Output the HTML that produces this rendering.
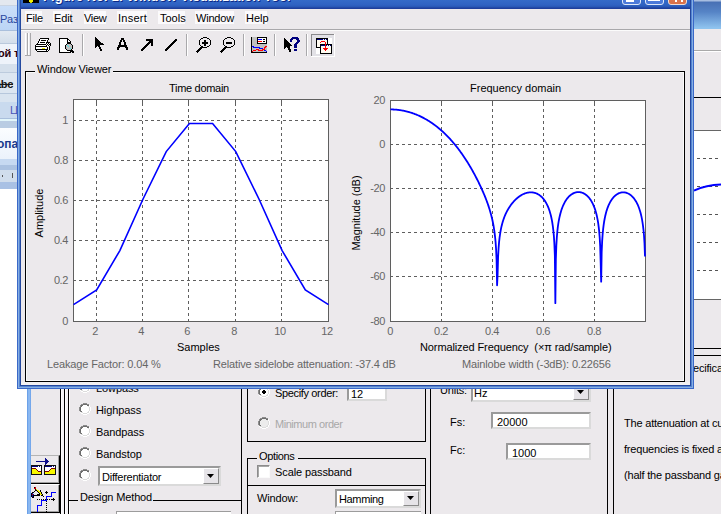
<!DOCTYPE html>
<html><head><meta charset="utf-8"><style>
html,body{margin:0;padding:0}
body{width:721px;height:514px;position:relative;overflow:hidden;background:#fff;font-family:"Liberation Sans", sans-serif}
.t{position:absolute;white-space:nowrap;font-family:"Liberation Sans", sans-serif;font-size:11px;line-height:14px}
</style></head><body>
<div style="position:absolute;left:0px;top:0px;width:17px;height:5px;background:#e3e8ef"></div><div style="position:absolute;left:0px;top:5px;width:17px;height:1px;background:#c9d4e2"></div><div style="position:absolute;left:0px;top:6px;width:17px;height:24px;background:linear-gradient(#c9def9,#bcd5f5)"></div><div style="position:absolute;left:0px;top:30px;width:17px;height:1px;background:#a9bfdc"></div><div style="position:absolute;left:0px;top:31px;width:17px;height:12px;background:linear-gradient(#e2e9f1,#d3deea)"></div><div style="position:absolute;left:0px;top:43px;width:17px;height:1px;background:#b9c9dc"></div><div style="position:absolute;left:0px;top:44px;width:17px;height:20px;background:#eef3fa"></div><div style="position:absolute;left:0px;top:64px;width:17px;height:8px;background:#d5e0ec"></div><div style="position:absolute;left:0px;top:72px;width:17px;height:1px;background:#bccbdd"></div><div style="position:absolute;left:0px;top:73px;width:17px;height:20px;background:#dce6f1"></div><div style="position:absolute;left:0px;top:93px;width:17px;height:1px;background:#b6c7dc"></div><div style="position:absolute;left:0px;top:94px;width:17px;height:8px;background:#d9e4f0"></div><div style="position:absolute;left:0px;top:102px;width:17px;height:16px;background:#c9daee"></div><div style="position:absolute;left:0px;top:118px;width:17px;height:1px;background:#a9bfdc"></div><div style="position:absolute;left:0px;top:119px;width:17px;height:2px;background:#e2f5fa"></div><div style="position:absolute;left:0px;top:121px;width:17px;height:7px;background:#b9cce3"></div><div style="position:absolute;left:0px;top:128px;width:17px;height:31px;background:linear-gradient(#fbfdff,#ebf2fb)"></div><div style="position:absolute;left:0px;top:159px;width:17px;height:6px;background:#c6d9f1"></div><div style="position:absolute;left:0px;top:165px;width:17px;height:5px;background:#abc2e1"></div><div style="position:absolute;left:0px;top:170px;width:17px;height:12px;background:#d0ddec"></div><div style="position:absolute;left:0px;top:182px;width:17px;height:7px;background:#a9c1e4"></div><div class="t" style="left:0px;top:12px;font-size:11px;color:#2a48a0;">Раз</div><div class="t" style="left:-2px;top:46px;font-size:11px;color:#2a0010;letter-spacing:-0.2px;font-weight:bold">ой т</div><div class="t" style="left:-5px;top:77px;font-size:11px;color:#181818;letter-spacing:-0.3px;text-decoration:line-through;font-weight:bold">abc</div><div class="t" style="left:10px;top:103px;font-size:11px;color:#4a55b8;">Ц</div><div class="t" style="left:-3px;top:137px;font-size:12px;color:#1c3a8c;font-weight:bold">опа</div><div style="position:absolute;left:2px;top:175px;width:1px;height:2px;background:#555"></div><div style="position:absolute;left:12px;top:173px;width:1px;height:5px;background:#555"></div><div style="position:absolute;left:694px;top:0px;width:27px;height:389px;background:#ece9ec"></div><div style="position:absolute;left:694px;top:0px;width:27px;height:29px;background:linear-gradient(#a7bde0 0,#a7bde0 1px,#4870b4 2px,#5684c6 12px,#8fc3ee 28px)"></div><div style="position:absolute;left:694px;top:50px;width:27px;height:1px;background:#a9a9a9"></div><div style="position:absolute;left:694px;top:51px;width:27px;height:1px;background:#fff"></div><div style="position:absolute;left:694px;top:97px;width:27px;height:1px;background:#000"></div><div style="position:absolute;left:694px;top:130px;width:27px;height:170px;background:#fff;border-top:1px solid #666;border-bottom:1px solid #666;box-sizing:border-box"></div><div style="position:absolute;left:697px;top:158px;width:24px;height:1px;background:repeating-linear-gradient(90deg,#555 0 3px,transparent 3px 6px)"></div><div style="position:absolute;left:697px;top:186px;width:24px;height:1px;background:repeating-linear-gradient(90deg,#555 0 3px,transparent 3px 6px)"></div><div style="position:absolute;left:697px;top:214px;width:24px;height:1px;background:repeating-linear-gradient(90deg,#555 0 3px,transparent 3px 6px)"></div><div style="position:absolute;left:697px;top:242px;width:24px;height:1px;background:repeating-linear-gradient(90deg,#555 0 3px,transparent 3px 6px)"></div><div style="position:absolute;left:697px;top:270px;width:24px;height:1px;background:repeating-linear-gradient(90deg,#555 0 3px,transparent 3px 6px)"></div><svg style="position:absolute;left:694px;top:175px" width="27" height="20"><path d="M0,15.5 C8,12 16,10 27,9.5" stroke="#0000ff" stroke-width="2" fill="none"/></svg><div style="position:absolute;left:694px;top:348px;width:27px;height:1px;background:#000"></div><div style="position:absolute;left:694px;top:355px;width:27px;height:1px;background:#000"></div><div class="t" style="left:680px;top:361px;font-size:11px;color:#000;letter-spacing:-0.2px;">Specifica</div><div style="position:absolute;left:31px;top:389px;width:690px;height:125px;background:#ece9ec"></div><div style="position:absolute;left:27px;top:389px;width:4px;height:125px;background:linear-gradient(90deg,#5f96e4,#95c1f4,#6a9fe9)"></div><div style="position:absolute;left:31px;top:455px;width:29px;height:29px;border-top:1px solid #b4b4b4;border-right:1px solid #000;border-bottom:1px solid #000;box-sizing:border-box;box-shadow:inset -1px -1px #a0a0a0"></div><div style="position:absolute;left:31px;top:484px;width:29px;height:29px;border-top:1px solid #fff;border-right:1px solid #000;border-bottom:1px solid #000;box-sizing:border-box;box-shadow:inset -1px -1px #a0a0a0"></div><svg style="position:absolute;left:0;top:0" width="721" height="514" shape-rendering="crispEdges"><rect x="31" y="465" width="11" height="1" fill="#101010"/><rect x="31" y="466" width="1" height="1" fill="#101010"/><rect x="32" y="466" width="6" height="1" fill="#000080"/><rect x="38" y="466" width="1" height="1" fill="#fff"/><rect x="39" y="466" width="1" height="1" fill="#000080"/><rect x="40" y="466" width="1" height="1" fill="#fff"/><rect x="41" y="466" width="1" height="1" fill="#101010"/><rect x="31" y="467" width="1" height="1" fill="#101010"/><rect x="32" y="467" width="9" height="1" fill="#fff"/><rect x="41" y="467" width="1" height="1" fill="#101010"/><rect x="31" y="468" width="1" height="1" fill="#101010"/><rect x="32" y="468" width="4" height="1" fill="#800000"/><rect x="36" y="468" width="5" height="1" fill="#fff"/><rect x="41" y="468" width="1" height="1" fill="#101010"/><rect x="31" y="469" width="1" height="1" fill="#101010"/><rect x="32" y="469" width="4" height="1" fill="#f8f800"/><rect x="36" y="469" width="1" height="1" fill="#800000"/><rect x="37" y="469" width="4" height="1" fill="#fff"/><rect x="41" y="469" width="1" height="1" fill="#101010"/><rect x="31" y="470" width="1" height="1" fill="#101010"/><rect x="32" y="470" width="5" height="1" fill="#f8f800"/><rect x="37" y="470" width="1" height="1" fill="#800000"/><rect x="38" y="470" width="3" height="1" fill="#fff"/><rect x="41" y="470" width="1" height="1" fill="#101010"/><rect x="31" y="471" width="1" height="1" fill="#101010"/><rect x="32" y="471" width="6" height="1" fill="#f8f800"/><rect x="38" y="471" width="3" height="1" fill="#800000"/><rect x="41" y="471" width="1" height="1" fill="#101010"/><rect x="31" y="472" width="1" height="1" fill="#101010"/><rect x="32" y="472" width="9" height="1" fill="#f8f800"/><rect x="41" y="472" width="1" height="1" fill="#101010"/><rect x="31" y="473" width="1" height="1" fill="#101010"/><rect x="32" y="473" width="9" height="1" fill="#f8f800"/><rect x="41" y="473" width="1" height="1" fill="#101010"/><rect x="31" y="474" width="11" height="1" fill="#101010"/><rect x="44" y="465" width="12" height="1" fill="#101010"/><rect x="44" y="466" width="1" height="1" fill="#101010"/><rect x="45" y="466" width="7" height="1" fill="#000080"/><rect x="52" y="466" width="1" height="1" fill="#fff"/><rect x="53" y="466" width="1" height="1" fill="#000080"/><rect x="54" y="466" width="1" height="1" fill="#fff"/><rect x="55" y="466" width="1" height="1" fill="#101010"/><rect x="44" y="467" width="1" height="1" fill="#101010"/><rect x="45" y="467" width="10" height="1" fill="#fff"/><rect x="55" y="467" width="1" height="1" fill="#101010"/><rect x="44" y="468" width="1" height="1" fill="#101010"/><rect x="45" y="468" width="6" height="1" fill="#fff"/><rect x="51" y="468" width="4" height="1" fill="#800000"/><rect x="55" y="468" width="1" height="1" fill="#101010"/><rect x="44" y="469" width="1" height="1" fill="#101010"/><rect x="45" y="469" width="5" height="1" fill="#fff"/><rect x="50" y="469" width="1" height="1" fill="#800000"/><rect x="51" y="469" width="4" height="1" fill="#f8f800"/><rect x="55" y="469" width="1" height="1" fill="#101010"/><rect x="44" y="470" width="1" height="1" fill="#101010"/><rect x="45" y="470" width="4" height="1" fill="#fff"/><rect x="49" y="470" width="1" height="1" fill="#800000"/><rect x="50" y="470" width="5" height="1" fill="#f8f800"/><rect x="55" y="470" width="1" height="1" fill="#101010"/><rect x="44" y="471" width="1" height="1" fill="#101010"/><rect x="45" y="471" width="4" height="1" fill="#800000"/><rect x="49" y="471" width="6" height="1" fill="#f8f800"/><rect x="55" y="471" width="1" height="1" fill="#101010"/><rect x="44" y="472" width="1" height="1" fill="#101010"/><rect x="45" y="472" width="10" height="1" fill="#f8f800"/><rect x="55" y="472" width="1" height="1" fill="#101010"/><rect x="44" y="473" width="1" height="1" fill="#101010"/><rect x="45" y="473" width="10" height="1" fill="#f8f800"/><rect x="55" y="473" width="1" height="1" fill="#101010"/><rect x="44" y="474" width="12" height="1" fill="#101010"/><rect x="45" y="458" width="1" height="1" fill="#10108c"/><rect x="45" y="459" width="2" height="1" fill="#10108c"/><rect x="45" y="460" width="3" height="1" fill="#10108c"/><rect x="36" y="461" width="13" height="1" fill="#10108c"/><rect x="45" y="462" width="3" height="1" fill="#10108c"/><rect x="45" y="463" width="2" height="1" fill="#10108c"/><rect x="45" y="464" width="1" height="1" fill="#10108c"/><rect x="34" y="487" width="1" height="1" fill="#000"/><rect x="35" y="487" width="1" height="1" fill="#d00000"/><rect x="34" y="488" width="2" height="1" fill="#d00000"/><rect x="35" y="489" width="1" height="1" fill="#000"/><rect x="36" y="489" width="1" height="1" fill="#f0f000"/><rect x="35" y="490" width="2" height="1" fill="#000"/><rect x="37" y="490" width="2" height="1" fill="#f0f000"/><rect x="40" y="490" width="1" height="1" fill="#000"/><rect x="34" y="491" width="1" height="1" fill="#000"/><rect x="35" y="491" width="2" height="1" fill="#e8e8e8"/><rect x="37" y="491" width="1" height="1" fill="#000"/><rect x="38" y="491" width="2" height="1" fill="#f0f000"/><rect x="40" y="491" width="1" height="1" fill="#000"/><rect x="46" y="491" width="1" height="1" fill="#000"/><rect x="32" y="492" width="2" height="1" fill="#000"/><rect x="34" y="492" width="4" height="1" fill="#e8e8e8"/><rect x="38" y="492" width="1" height="1" fill="#000"/><rect x="39" y="492" width="2" height="1" fill="#f0f000"/><rect x="41" y="492" width="1" height="1" fill="#000"/><rect x="45" y="492" width="3" height="1" fill="#000"/><rect x="51" y="492" width="5" height="1" fill="#0000ff"/><rect x="31" y="493" width="1" height="1" fill="#000"/><rect x="32" y="493" width="1" height="1" fill="#0010a0"/><rect x="33" y="493" width="6" height="1" fill="#e8e8e8"/><rect x="39" y="493" width="1" height="1" fill="#000"/><rect x="40" y="493" width="1" height="1" fill="#f0f000"/><rect x="41" y="493" width="1" height="1" fill="#000"/><rect x="46" y="493" width="1" height="1" fill="#000"/><rect x="51" y="493" width="1" height="1" fill="#0000ff"/><rect x="31" y="494" width="1" height="1" fill="#000"/><rect x="32" y="494" width="1" height="1" fill="#d00000"/><rect x="33" y="494" width="1" height="1" fill="#0010a0"/><rect x="34" y="494" width="3" height="1" fill="#e8e8e8"/><rect x="37" y="494" width="3" height="1" fill="#000"/><rect x="40" y="494" width="2" height="1" fill="#f0f000"/><rect x="42" y="494" width="1" height="1" fill="#000"/><rect x="51" y="494" width="1" height="1" fill="#0000ff"/><rect x="31" y="495" width="1" height="1" fill="#000"/><rect x="32" y="495" width="1" height="1" fill="#0010a0"/><rect x="33" y="495" width="7" height="1" fill="#000"/><rect x="41" y="495" width="2" height="1" fill="#000"/><rect x="51" y="495" width="1" height="1" fill="#0000ff"/><rect x="31" y="496" width="1" height="1" fill="#000"/><rect x="32" y="496" width="1" height="1" fill="#0010a0"/><rect x="33" y="496" width="1" height="1" fill="#000"/><rect x="43" y="496" width="1" height="1" fill="#000"/><rect x="46" y="496" width="6" height="1" fill="#0000ff"/><rect x="32" y="497" width="2" height="1" fill="#000"/><rect x="46" y="497" width="1" height="1" fill="#0000ff"/><rect x="46" y="498" width="1" height="1" fill="#0000ff"/><rect x="53" y="498" width="1" height="1" fill="#000"/><rect x="37" y="499" width="1" height="1" fill="#000"/><rect x="39" y="499" width="1" height="1" fill="#000"/><rect x="41" y="499" width="1" height="1" fill="#000"/><rect x="43" y="499" width="1" height="1" fill="#000"/><rect x="45" y="499" width="1" height="1" fill="#000"/><rect x="46" y="499" width="1" height="1" fill="#0000ff"/><rect x="47" y="499" width="1" height="1" fill="#000"/><rect x="49" y="499" width="1" height="1" fill="#000"/><rect x="51" y="499" width="4" height="1" fill="#000"/><rect x="41" y="500" width="6" height="1" fill="#0000ff"/><rect x="53" y="500" width="1" height="1" fill="#000"/><rect x="41" y="501" width="1" height="1" fill="#0000ff"/><rect x="46" y="501" width="1" height="1" fill="#000"/><rect x="41" y="502" width="1" height="1" fill="#0000ff"/><rect x="41" y="503" width="1" height="1" fill="#0000ff"/><rect x="46" y="503" width="1" height="1" fill="#000"/><rect x="41" y="504" width="1" height="1" fill="#0000ff"/><rect x="37" y="505" width="5" height="1" fill="#0000ff"/><rect x="46" y="505" width="1" height="1" fill="#000"/><rect x="37" y="506" width="1" height="1" fill="#0000ff"/><rect x="37" y="507" width="1" height="1" fill="#0000ff"/><rect x="46" y="507" width="1" height="1" fill="#000"/><rect x="37" y="508" width="1" height="1" fill="#0000ff"/><rect x="37" y="509" width="1" height="1" fill="#0000ff"/><rect x="46" y="509" width="1" height="1" fill="#000"/><rect x="37" y="510" width="1" height="1" fill="#0000ff"/><rect x="37" y="511" width="1" height="1" fill="#0000ff"/><rect x="46" y="511" width="1" height="1" fill="#000"/></svg><div style="position:absolute;left:61px;top:389px;width:3px;height:125px;background:#f6f5f8"></div><div style="position:absolute;left:65px;top:389px;width:3px;height:125px;background:#f6f5f8"></div><div style="position:absolute;left:60px;top:389px;width:1px;height:125px;background:#000"></div><div style="position:absolute;left:61px;top:389px;width:1px;height:125px;background:#fff"></div><div style="position:absolute;left:64px;top:389px;width:1px;height:125px;background:#000"></div><div style="position:absolute;left:65px;top:389px;width:1px;height:125px;background:#fff"></div><div style="position:absolute;left:68px;top:389px;width:1px;height:125px;background:#000"></div><div style="position:absolute;left:69px;top:389px;width:1px;height:125px;background:#fff"></div><svg style="position:absolute;left:0;top:0" width="721" height="514" shape-rendering="crispEdges"><rect x="83" y="381" width="4" height="1" fill="#8c8c8c"/><rect x="81" y="382" width="2" height="1" fill="#8c8c8c"/><rect x="83" y="382" width="4" height="1" fill="#6c6c6c"/><rect x="87" y="382" width="2" height="1" fill="#8c8c8c"/><rect x="80" y="383" width="1" height="1" fill="#8c8c8c"/><rect x="81" y="383" width="2" height="1" fill="#6c6c6c"/><rect x="83" y="383" width="4" height="1" fill="#ffffff"/><rect x="87" y="383" width="2" height="1" fill="#6c6c6c"/><rect x="89" y="383" width="1" height="1" fill="#ffffff"/><rect x="80" y="384" width="1" height="1" fill="#8c8c8c"/><rect x="81" y="384" width="1" height="1" fill="#6c6c6c"/><rect x="82" y="384" width="6" height="1" fill="#ffffff"/><rect x="88" y="384" width="1" height="1" fill="#dcdcdc"/><rect x="89" y="384" width="1" height="1" fill="#ffffff"/><rect x="79" y="385" width="1" height="1" fill="#8c8c8c"/><rect x="80" y="385" width="1" height="1" fill="#6c6c6c"/><rect x="81" y="385" width="8" height="1" fill="#ffffff"/><rect x="89" y="385" width="1" height="1" fill="#dcdcdc"/><rect x="90" y="385" width="1" height="1" fill="#ffffff"/><rect x="79" y="386" width="1" height="1" fill="#8c8c8c"/><rect x="80" y="386" width="1" height="1" fill="#6c6c6c"/><rect x="81" y="386" width="8" height="1" fill="#ffffff"/><rect x="89" y="386" width="1" height="1" fill="#dcdcdc"/><rect x="90" y="386" width="1" height="1" fill="#ffffff"/><rect x="79" y="387" width="1" height="1" fill="#8c8c8c"/><rect x="80" y="387" width="1" height="1" fill="#6c6c6c"/><rect x="81" y="387" width="8" height="1" fill="#ffffff"/><rect x="89" y="387" width="1" height="1" fill="#dcdcdc"/><rect x="90" y="387" width="1" height="1" fill="#ffffff"/><rect x="79" y="388" width="1" height="1" fill="#8c8c8c"/><rect x="80" y="388" width="1" height="1" fill="#6c6c6c"/><rect x="81" y="388" width="8" height="1" fill="#ffffff"/><rect x="89" y="388" width="1" height="1" fill="#dcdcdc"/><rect x="90" y="388" width="1" height="1" fill="#ffffff"/><rect x="80" y="389" width="1" height="1" fill="#8c8c8c"/><rect x="81" y="389" width="1" height="1" fill="#6c6c6c"/><rect x="82" y="389" width="6" height="1" fill="#ffffff"/><rect x="88" y="389" width="1" height="1" fill="#dcdcdc"/><rect x="89" y="389" width="1" height="1" fill="#ffffff"/><rect x="80" y="390" width="1" height="1" fill="#ffffff"/><rect x="81" y="390" width="2" height="1" fill="#dcdcdc"/><rect x="83" y="390" width="4" height="1" fill="#ffffff"/><rect x="87" y="390" width="2" height="1" fill="#dcdcdc"/><rect x="89" y="390" width="1" height="1" fill="#ffffff"/><rect x="81" y="391" width="2" height="1" fill="#ffffff"/><rect x="83" y="391" width="4" height="1" fill="#dcdcdc"/><rect x="87" y="391" width="2" height="1" fill="#ffffff"/><rect x="83" y="392" width="4" height="1" fill="#ffffff"/></svg><svg style="position:absolute;left:0;top:0" width="721" height="514" shape-rendering="crispEdges"><rect x="83" y="403" width="4" height="1" fill="#8c8c8c"/><rect x="81" y="404" width="2" height="1" fill="#8c8c8c"/><rect x="83" y="404" width="4" height="1" fill="#6c6c6c"/><rect x="87" y="404" width="2" height="1" fill="#8c8c8c"/><rect x="80" y="405" width="1" height="1" fill="#8c8c8c"/><rect x="81" y="405" width="2" height="1" fill="#6c6c6c"/><rect x="83" y="405" width="4" height="1" fill="#ffffff"/><rect x="87" y="405" width="2" height="1" fill="#6c6c6c"/><rect x="89" y="405" width="1" height="1" fill="#ffffff"/><rect x="80" y="406" width="1" height="1" fill="#8c8c8c"/><rect x="81" y="406" width="1" height="1" fill="#6c6c6c"/><rect x="82" y="406" width="6" height="1" fill="#ffffff"/><rect x="88" y="406" width="1" height="1" fill="#dcdcdc"/><rect x="89" y="406" width="1" height="1" fill="#ffffff"/><rect x="79" y="407" width="1" height="1" fill="#8c8c8c"/><rect x="80" y="407" width="1" height="1" fill="#6c6c6c"/><rect x="81" y="407" width="8" height="1" fill="#ffffff"/><rect x="89" y="407" width="1" height="1" fill="#dcdcdc"/><rect x="90" y="407" width="1" height="1" fill="#ffffff"/><rect x="79" y="408" width="1" height="1" fill="#8c8c8c"/><rect x="80" y="408" width="1" height="1" fill="#6c6c6c"/><rect x="81" y="408" width="8" height="1" fill="#ffffff"/><rect x="89" y="408" width="1" height="1" fill="#dcdcdc"/><rect x="90" y="408" width="1" height="1" fill="#ffffff"/><rect x="79" y="409" width="1" height="1" fill="#8c8c8c"/><rect x="80" y="409" width="1" height="1" fill="#6c6c6c"/><rect x="81" y="409" width="8" height="1" fill="#ffffff"/><rect x="89" y="409" width="1" height="1" fill="#dcdcdc"/><rect x="90" y="409" width="1" height="1" fill="#ffffff"/><rect x="79" y="410" width="1" height="1" fill="#8c8c8c"/><rect x="80" y="410" width="1" height="1" fill="#6c6c6c"/><rect x="81" y="410" width="8" height="1" fill="#ffffff"/><rect x="89" y="410" width="1" height="1" fill="#dcdcdc"/><rect x="90" y="410" width="1" height="1" fill="#ffffff"/><rect x="80" y="411" width="1" height="1" fill="#8c8c8c"/><rect x="81" y="411" width="1" height="1" fill="#6c6c6c"/><rect x="82" y="411" width="6" height="1" fill="#ffffff"/><rect x="88" y="411" width="1" height="1" fill="#dcdcdc"/><rect x="89" y="411" width="1" height="1" fill="#ffffff"/><rect x="80" y="412" width="1" height="1" fill="#ffffff"/><rect x="81" y="412" width="2" height="1" fill="#dcdcdc"/><rect x="83" y="412" width="4" height="1" fill="#ffffff"/><rect x="87" y="412" width="2" height="1" fill="#dcdcdc"/><rect x="89" y="412" width="1" height="1" fill="#ffffff"/><rect x="81" y="413" width="2" height="1" fill="#ffffff"/><rect x="83" y="413" width="4" height="1" fill="#dcdcdc"/><rect x="87" y="413" width="2" height="1" fill="#ffffff"/><rect x="83" y="414" width="4" height="1" fill="#ffffff"/></svg><svg style="position:absolute;left:0;top:0" width="721" height="514" shape-rendering="crispEdges"><rect x="83" y="425" width="4" height="1" fill="#8c8c8c"/><rect x="81" y="426" width="2" height="1" fill="#8c8c8c"/><rect x="83" y="426" width="4" height="1" fill="#6c6c6c"/><rect x="87" y="426" width="2" height="1" fill="#8c8c8c"/><rect x="80" y="427" width="1" height="1" fill="#8c8c8c"/><rect x="81" y="427" width="2" height="1" fill="#6c6c6c"/><rect x="83" y="427" width="4" height="1" fill="#ffffff"/><rect x="87" y="427" width="2" height="1" fill="#6c6c6c"/><rect x="89" y="427" width="1" height="1" fill="#ffffff"/><rect x="80" y="428" width="1" height="1" fill="#8c8c8c"/><rect x="81" y="428" width="1" height="1" fill="#6c6c6c"/><rect x="82" y="428" width="6" height="1" fill="#ffffff"/><rect x="88" y="428" width="1" height="1" fill="#dcdcdc"/><rect x="89" y="428" width="1" height="1" fill="#ffffff"/><rect x="79" y="429" width="1" height="1" fill="#8c8c8c"/><rect x="80" y="429" width="1" height="1" fill="#6c6c6c"/><rect x="81" y="429" width="8" height="1" fill="#ffffff"/><rect x="89" y="429" width="1" height="1" fill="#dcdcdc"/><rect x="90" y="429" width="1" height="1" fill="#ffffff"/><rect x="79" y="430" width="1" height="1" fill="#8c8c8c"/><rect x="80" y="430" width="1" height="1" fill="#6c6c6c"/><rect x="81" y="430" width="8" height="1" fill="#ffffff"/><rect x="89" y="430" width="1" height="1" fill="#dcdcdc"/><rect x="90" y="430" width="1" height="1" fill="#ffffff"/><rect x="79" y="431" width="1" height="1" fill="#8c8c8c"/><rect x="80" y="431" width="1" height="1" fill="#6c6c6c"/><rect x="81" y="431" width="8" height="1" fill="#ffffff"/><rect x="89" y="431" width="1" height="1" fill="#dcdcdc"/><rect x="90" y="431" width="1" height="1" fill="#ffffff"/><rect x="79" y="432" width="1" height="1" fill="#8c8c8c"/><rect x="80" y="432" width="1" height="1" fill="#6c6c6c"/><rect x="81" y="432" width="8" height="1" fill="#ffffff"/><rect x="89" y="432" width="1" height="1" fill="#dcdcdc"/><rect x="90" y="432" width="1" height="1" fill="#ffffff"/><rect x="80" y="433" width="1" height="1" fill="#8c8c8c"/><rect x="81" y="433" width="1" height="1" fill="#6c6c6c"/><rect x="82" y="433" width="6" height="1" fill="#ffffff"/><rect x="88" y="433" width="1" height="1" fill="#dcdcdc"/><rect x="89" y="433" width="1" height="1" fill="#ffffff"/><rect x="80" y="434" width="1" height="1" fill="#ffffff"/><rect x="81" y="434" width="2" height="1" fill="#dcdcdc"/><rect x="83" y="434" width="4" height="1" fill="#ffffff"/><rect x="87" y="434" width="2" height="1" fill="#dcdcdc"/><rect x="89" y="434" width="1" height="1" fill="#ffffff"/><rect x="81" y="435" width="2" height="1" fill="#ffffff"/><rect x="83" y="435" width="4" height="1" fill="#dcdcdc"/><rect x="87" y="435" width="2" height="1" fill="#ffffff"/><rect x="83" y="436" width="4" height="1" fill="#ffffff"/></svg><svg style="position:absolute;left:0;top:0" width="721" height="514" shape-rendering="crispEdges"><rect x="83" y="447" width="4" height="1" fill="#8c8c8c"/><rect x="81" y="448" width="2" height="1" fill="#8c8c8c"/><rect x="83" y="448" width="4" height="1" fill="#6c6c6c"/><rect x="87" y="448" width="2" height="1" fill="#8c8c8c"/><rect x="80" y="449" width="1" height="1" fill="#8c8c8c"/><rect x="81" y="449" width="2" height="1" fill="#6c6c6c"/><rect x="83" y="449" width="4" height="1" fill="#ffffff"/><rect x="87" y="449" width="2" height="1" fill="#6c6c6c"/><rect x="89" y="449" width="1" height="1" fill="#ffffff"/><rect x="80" y="450" width="1" height="1" fill="#8c8c8c"/><rect x="81" y="450" width="1" height="1" fill="#6c6c6c"/><rect x="82" y="450" width="6" height="1" fill="#ffffff"/><rect x="88" y="450" width="1" height="1" fill="#dcdcdc"/><rect x="89" y="450" width="1" height="1" fill="#ffffff"/><rect x="79" y="451" width="1" height="1" fill="#8c8c8c"/><rect x="80" y="451" width="1" height="1" fill="#6c6c6c"/><rect x="81" y="451" width="8" height="1" fill="#ffffff"/><rect x="89" y="451" width="1" height="1" fill="#dcdcdc"/><rect x="90" y="451" width="1" height="1" fill="#ffffff"/><rect x="79" y="452" width="1" height="1" fill="#8c8c8c"/><rect x="80" y="452" width="1" height="1" fill="#6c6c6c"/><rect x="81" y="452" width="8" height="1" fill="#ffffff"/><rect x="89" y="452" width="1" height="1" fill="#dcdcdc"/><rect x="90" y="452" width="1" height="1" fill="#ffffff"/><rect x="79" y="453" width="1" height="1" fill="#8c8c8c"/><rect x="80" y="453" width="1" height="1" fill="#6c6c6c"/><rect x="81" y="453" width="8" height="1" fill="#ffffff"/><rect x="89" y="453" width="1" height="1" fill="#dcdcdc"/><rect x="90" y="453" width="1" height="1" fill="#ffffff"/><rect x="79" y="454" width="1" height="1" fill="#8c8c8c"/><rect x="80" y="454" width="1" height="1" fill="#6c6c6c"/><rect x="81" y="454" width="8" height="1" fill="#ffffff"/><rect x="89" y="454" width="1" height="1" fill="#dcdcdc"/><rect x="90" y="454" width="1" height="1" fill="#ffffff"/><rect x="80" y="455" width="1" height="1" fill="#8c8c8c"/><rect x="81" y="455" width="1" height="1" fill="#6c6c6c"/><rect x="82" y="455" width="6" height="1" fill="#ffffff"/><rect x="88" y="455" width="1" height="1" fill="#dcdcdc"/><rect x="89" y="455" width="1" height="1" fill="#ffffff"/><rect x="80" y="456" width="1" height="1" fill="#ffffff"/><rect x="81" y="456" width="2" height="1" fill="#dcdcdc"/><rect x="83" y="456" width="4" height="1" fill="#ffffff"/><rect x="87" y="456" width="2" height="1" fill="#dcdcdc"/><rect x="89" y="456" width="1" height="1" fill="#ffffff"/><rect x="81" y="457" width="2" height="1" fill="#ffffff"/><rect x="83" y="457" width="4" height="1" fill="#dcdcdc"/><rect x="87" y="457" width="2" height="1" fill="#ffffff"/><rect x="83" y="458" width="4" height="1" fill="#ffffff"/></svg><svg style="position:absolute;left:0;top:0" width="721" height="514" shape-rendering="crispEdges"><rect x="83" y="469" width="4" height="1" fill="#8c8c8c"/><rect x="81" y="470" width="2" height="1" fill="#8c8c8c"/><rect x="83" y="470" width="4" height="1" fill="#6c6c6c"/><rect x="87" y="470" width="2" height="1" fill="#8c8c8c"/><rect x="80" y="471" width="1" height="1" fill="#8c8c8c"/><rect x="81" y="471" width="2" height="1" fill="#6c6c6c"/><rect x="83" y="471" width="4" height="1" fill="#ffffff"/><rect x="87" y="471" width="2" height="1" fill="#6c6c6c"/><rect x="89" y="471" width="1" height="1" fill="#ffffff"/><rect x="80" y="472" width="1" height="1" fill="#8c8c8c"/><rect x="81" y="472" width="1" height="1" fill="#6c6c6c"/><rect x="82" y="472" width="6" height="1" fill="#ffffff"/><rect x="88" y="472" width="1" height="1" fill="#dcdcdc"/><rect x="89" y="472" width="1" height="1" fill="#ffffff"/><rect x="79" y="473" width="1" height="1" fill="#8c8c8c"/><rect x="80" y="473" width="1" height="1" fill="#6c6c6c"/><rect x="81" y="473" width="8" height="1" fill="#ffffff"/><rect x="89" y="473" width="1" height="1" fill="#dcdcdc"/><rect x="90" y="473" width="1" height="1" fill="#ffffff"/><rect x="79" y="474" width="1" height="1" fill="#8c8c8c"/><rect x="80" y="474" width="1" height="1" fill="#6c6c6c"/><rect x="81" y="474" width="8" height="1" fill="#ffffff"/><rect x="89" y="474" width="1" height="1" fill="#dcdcdc"/><rect x="90" y="474" width="1" height="1" fill="#ffffff"/><rect x="79" y="475" width="1" height="1" fill="#8c8c8c"/><rect x="80" y="475" width="1" height="1" fill="#6c6c6c"/><rect x="81" y="475" width="8" height="1" fill="#ffffff"/><rect x="89" y="475" width="1" height="1" fill="#dcdcdc"/><rect x="90" y="475" width="1" height="1" fill="#ffffff"/><rect x="79" y="476" width="1" height="1" fill="#8c8c8c"/><rect x="80" y="476" width="1" height="1" fill="#6c6c6c"/><rect x="81" y="476" width="8" height="1" fill="#ffffff"/><rect x="89" y="476" width="1" height="1" fill="#dcdcdc"/><rect x="90" y="476" width="1" height="1" fill="#ffffff"/><rect x="80" y="477" width="1" height="1" fill="#8c8c8c"/><rect x="81" y="477" width="1" height="1" fill="#6c6c6c"/><rect x="82" y="477" width="6" height="1" fill="#ffffff"/><rect x="88" y="477" width="1" height="1" fill="#dcdcdc"/><rect x="89" y="477" width="1" height="1" fill="#ffffff"/><rect x="80" y="478" width="1" height="1" fill="#ffffff"/><rect x="81" y="478" width="2" height="1" fill="#dcdcdc"/><rect x="83" y="478" width="4" height="1" fill="#ffffff"/><rect x="87" y="478" width="2" height="1" fill="#dcdcdc"/><rect x="89" y="478" width="1" height="1" fill="#ffffff"/><rect x="81" y="479" width="2" height="1" fill="#ffffff"/><rect x="83" y="479" width="4" height="1" fill="#dcdcdc"/><rect x="87" y="479" width="2" height="1" fill="#ffffff"/><rect x="83" y="480" width="4" height="1" fill="#ffffff"/></svg><div class="t" style="left:96px;top:381px;font-size:11px;color:#000;letter-spacing:-0.1px;">Lowpass</div><div class="t" style="left:96px;top:403px;font-size:11px;color:#000;letter-spacing:-0.1px;">Highpass</div><div class="t" style="left:96px;top:425px;font-size:11px;color:#000;letter-spacing:-0.1px;">Bandpass</div><div class="t" style="left:96px;top:447px;font-size:11px;color:#000;letter-spacing:-0.1px;">Bandstop</div><div style="position:absolute;left:98px;top:466px;width:123px;height:20px;box-sizing:border-box;border:2px solid;border-color:#9a9a9a #dadada #dadada #9a9a9a;background:#fff"></div><div style="position:absolute;left:203px;top:468px;width:16px;height:16px;box-sizing:border-box;border:1px solid;border-color:#fff #8a8a8a #8a8a8a #fff;background:#e6e4e8"></div><svg style="position:absolute;left:207px;top:474px" width="8" height="5"><path d="M0,0 H7 L3.5,4 Z" fill="#000"/></svg><div class="t" style="left:102px;top:470px;font-size:11px;color:#000;letter-spacing:-0.25px;">Differentiator</div><div style="position:absolute;left:68px;top:500px;width:174px;height:30px;border:1px solid #000;box-sizing:border-box"></div><div style="position:absolute;left:78px;top:492px;width:75px;height:14px;background:#ece9ec"></div><div class="t" style="left:80px;top:490px;font-size:11px;color:#000;letter-spacing:-0.15px;">Design Method</div><div style="position:absolute;left:116px;top:511px;width:115px;height:10px;border-top:1px solid #9c9c9c;border-left:1px solid #9c9c9c;background:#fff;box-sizing:border-box"></div><div style="position:absolute;left:241px;top:389px;width:1px;height:125px;background:#000"></div><div style="position:absolute;left:247px;top:370px;width:179px;height:72px;border:1px solid #000;box-sizing:border-box"></div><svg style="position:absolute;left:0;top:0" width="721" height="514" shape-rendering="crispEdges"><rect x="262" y="386" width="4" height="1" fill="#8c8c8c"/><rect x="260" y="387" width="2" height="1" fill="#8c8c8c"/><rect x="262" y="387" width="4" height="1" fill="#6c6c6c"/><rect x="266" y="387" width="2" height="1" fill="#8c8c8c"/><rect x="259" y="388" width="1" height="1" fill="#8c8c8c"/><rect x="260" y="388" width="2" height="1" fill="#6c6c6c"/><rect x="262" y="388" width="4" height="1" fill="#ffffff"/><rect x="266" y="388" width="2" height="1" fill="#6c6c6c"/><rect x="268" y="388" width="1" height="1" fill="#ffffff"/><rect x="259" y="389" width="1" height="1" fill="#8c8c8c"/><rect x="260" y="389" width="1" height="1" fill="#6c6c6c"/><rect x="261" y="389" width="6" height="1" fill="#ffffff"/><rect x="267" y="389" width="1" height="1" fill="#dcdcdc"/><rect x="268" y="389" width="1" height="1" fill="#ffffff"/><rect x="258" y="390" width="1" height="1" fill="#8c8c8c"/><rect x="259" y="390" width="1" height="1" fill="#6c6c6c"/><rect x="260" y="390" width="3" height="1" fill="#ffffff"/><rect x="263" y="390" width="2" height="1" fill="#000"/><rect x="265" y="390" width="3" height="1" fill="#ffffff"/><rect x="268" y="390" width="1" height="1" fill="#dcdcdc"/><rect x="269" y="390" width="1" height="1" fill="#ffffff"/><rect x="258" y="391" width="1" height="1" fill="#8c8c8c"/><rect x="259" y="391" width="1" height="1" fill="#6c6c6c"/><rect x="260" y="391" width="2" height="1" fill="#ffffff"/><rect x="262" y="391" width="4" height="1" fill="#000"/><rect x="266" y="391" width="2" height="1" fill="#ffffff"/><rect x="268" y="391" width="1" height="1" fill="#dcdcdc"/><rect x="269" y="391" width="1" height="1" fill="#ffffff"/><rect x="258" y="392" width="1" height="1" fill="#8c8c8c"/><rect x="259" y="392" width="1" height="1" fill="#6c6c6c"/><rect x="260" y="392" width="2" height="1" fill="#ffffff"/><rect x="262" y="392" width="4" height="1" fill="#000"/><rect x="266" y="392" width="2" height="1" fill="#ffffff"/><rect x="268" y="392" width="1" height="1" fill="#dcdcdc"/><rect x="269" y="392" width="1" height="1" fill="#ffffff"/><rect x="258" y="393" width="1" height="1" fill="#8c8c8c"/><rect x="259" y="393" width="1" height="1" fill="#6c6c6c"/><rect x="260" y="393" width="3" height="1" fill="#ffffff"/><rect x="263" y="393" width="2" height="1" fill="#000"/><rect x="265" y="393" width="3" height="1" fill="#ffffff"/><rect x="268" y="393" width="1" height="1" fill="#dcdcdc"/><rect x="269" y="393" width="1" height="1" fill="#ffffff"/><rect x="259" y="394" width="1" height="1" fill="#8c8c8c"/><rect x="260" y="394" width="1" height="1" fill="#6c6c6c"/><rect x="261" y="394" width="6" height="1" fill="#ffffff"/><rect x="267" y="394" width="1" height="1" fill="#dcdcdc"/><rect x="268" y="394" width="1" height="1" fill="#ffffff"/><rect x="259" y="395" width="1" height="1" fill="#ffffff"/><rect x="260" y="395" width="2" height="1" fill="#dcdcdc"/><rect x="262" y="395" width="4" height="1" fill="#ffffff"/><rect x="266" y="395" width="2" height="1" fill="#dcdcdc"/><rect x="268" y="395" width="1" height="1" fill="#ffffff"/><rect x="260" y="396" width="2" height="1" fill="#ffffff"/><rect x="262" y="396" width="4" height="1" fill="#dcdcdc"/><rect x="266" y="396" width="2" height="1" fill="#ffffff"/><rect x="262" y="397" width="4" height="1" fill="#ffffff"/></svg><div class="t" style="left:275px;top:386px;font-size:11px;color:#000;letter-spacing:-0.35px;">Specify order:</div><div style="position:absolute;left:347px;top:384px;width:40px;height:17px;border:2px solid;border-color:#9a9a9a #dadada #dadada #9a9a9a;background:#fff;box-sizing:border-box"></div><div class="t" style="left:351px;top:387px;font-size:11px;color:#000;">12</div><svg style="position:absolute;left:0;top:0" width="721" height="514" shape-rendering="crispEdges"><rect x="262" y="417" width="4" height="1" fill="#8c8c8c"/><rect x="260" y="418" width="2" height="1" fill="#8c8c8c"/><rect x="262" y="418" width="4" height="1" fill="#6c6c6c"/><rect x="266" y="418" width="2" height="1" fill="#8c8c8c"/><rect x="259" y="419" width="1" height="1" fill="#8c8c8c"/><rect x="260" y="419" width="2" height="1" fill="#6c6c6c"/><rect x="262" y="419" width="4" height="1" fill="#ececec"/><rect x="266" y="419" width="2" height="1" fill="#6c6c6c"/><rect x="268" y="419" width="1" height="1" fill="#ffffff"/><rect x="259" y="420" width="1" height="1" fill="#8c8c8c"/><rect x="260" y="420" width="1" height="1" fill="#6c6c6c"/><rect x="261" y="420" width="6" height="1" fill="#ececec"/><rect x="267" y="420" width="1" height="1" fill="#dcdcdc"/><rect x="268" y="420" width="1" height="1" fill="#ffffff"/><rect x="258" y="421" width="1" height="1" fill="#8c8c8c"/><rect x="259" y="421" width="1" height="1" fill="#6c6c6c"/><rect x="260" y="421" width="8" height="1" fill="#ececec"/><rect x="268" y="421" width="1" height="1" fill="#dcdcdc"/><rect x="269" y="421" width="1" height="1" fill="#ffffff"/><rect x="258" y="422" width="1" height="1" fill="#8c8c8c"/><rect x="259" y="422" width="1" height="1" fill="#6c6c6c"/><rect x="260" y="422" width="8" height="1" fill="#ececec"/><rect x="268" y="422" width="1" height="1" fill="#dcdcdc"/><rect x="269" y="422" width="1" height="1" fill="#ffffff"/><rect x="258" y="423" width="1" height="1" fill="#8c8c8c"/><rect x="259" y="423" width="1" height="1" fill="#6c6c6c"/><rect x="260" y="423" width="8" height="1" fill="#ececec"/><rect x="268" y="423" width="1" height="1" fill="#dcdcdc"/><rect x="269" y="423" width="1" height="1" fill="#ffffff"/><rect x="258" y="424" width="1" height="1" fill="#8c8c8c"/><rect x="259" y="424" width="1" height="1" fill="#6c6c6c"/><rect x="260" y="424" width="8" height="1" fill="#ececec"/><rect x="268" y="424" width="1" height="1" fill="#dcdcdc"/><rect x="269" y="424" width="1" height="1" fill="#ffffff"/><rect x="259" y="425" width="1" height="1" fill="#8c8c8c"/><rect x="260" y="425" width="1" height="1" fill="#6c6c6c"/><rect x="261" y="425" width="6" height="1" fill="#ececec"/><rect x="267" y="425" width="1" height="1" fill="#dcdcdc"/><rect x="268" y="425" width="1" height="1" fill="#ffffff"/><rect x="259" y="426" width="1" height="1" fill="#ffffff"/><rect x="260" y="426" width="2" height="1" fill="#dcdcdc"/><rect x="262" y="426" width="4" height="1" fill="#ececec"/><rect x="266" y="426" width="2" height="1" fill="#dcdcdc"/><rect x="268" y="426" width="1" height="1" fill="#ffffff"/><rect x="260" y="427" width="2" height="1" fill="#ffffff"/><rect x="262" y="427" width="4" height="1" fill="#dcdcdc"/><rect x="266" y="427" width="2" height="1" fill="#ffffff"/><rect x="262" y="428" width="4" height="1" fill="#ffffff"/></svg><div class="t" style="left:275px;top:417px;font-size:11px;color:#a8a8a8;letter-spacing:-0.45px;">Minimum order</div><div style="position:absolute;left:247px;top:458px;width:179px;height:28px;border:1px solid #000;box-sizing:border-box"></div><div style="position:absolute;left:257px;top:450px;width:41px;height:14px;background:#ece9ec"></div><div class="t" style="left:259px;top:449px;font-size:11px;color:#000;letter-spacing:-0.35px;">Options</div><div style="position:absolute;left:257px;top:465px;width:13px;height:13px;border:1px solid;border-color:#8c8c8c #fafafa #fafafa #8c8c8c;background:#fff;box-sizing:border-box;box-shadow:inset 1px 1px #a8a8a8"></div><div class="t" style="left:275px;top:465px;font-size:11px;color:#000;letter-spacing:-0.1px;">Scale passband</div><div style="position:absolute;left:247px;top:485px;width:179px;height:40px;border:1px solid #000;box-sizing:border-box"></div><div class="t" style="left:257px;top:491px;font-size:11px;color:#000;letter-spacing:-0.15px;">Window:</div><div style="position:absolute;left:335px;top:489px;width:86px;height:19px;box-sizing:border-box;border:2px solid;border-color:#9a9a9a #dadada #dadada #9a9a9a;background:#fff"></div><div style="position:absolute;left:403px;top:491px;width:16px;height:15px;box-sizing:border-box;border:1px solid;border-color:#fff #8a8a8a #8a8a8a #fff;background:#e6e4e8"></div><svg style="position:absolute;left:407px;top:496px" width="8" height="5"><path d="M0,0 H7 L3.5,4 Z" fill="#000"/></svg><div class="t" style="left:339px;top:492px;font-size:11px;color:#000;letter-spacing:-0.35px;">Hamming</div><div style="position:absolute;left:335px;top:511px;width:86px;height:10px;border-top:1px solid #9c9c9c;border-left:1px solid #9c9c9c;background:#fff;box-sizing:border-box"></div><div style="position:absolute;left:430px;top:389px;width:1px;height:125px;background:#000"></div><div class="t" style="left:440px;top:383px;font-size:11px;color:#000;letter-spacing:-0.2px;">Units:</div><div style="position:absolute;left:471px;top:382px;width:120px;height:20px;box-sizing:border-box;border:2px solid;border-color:#9a9a9a #dadada #dadada #9a9a9a;background:#fff"></div><div style="position:absolute;left:573px;top:384px;width:16px;height:16px;box-sizing:border-box;border:1px solid;border-color:#fff #8a8a8a #8a8a8a #fff;background:#e6e4e8"></div><svg style="position:absolute;left:577px;top:390px" width="8" height="5"><path d="M0,0 H7 L3.5,4 Z" fill="#000"/></svg><div class="t" style="left:474px;top:386px;font-size:11px;color:#000;">Hz</div><div class="t" style="left:450px;top:415px;font-size:11px;color:#000;">Fs:</div><div style="position:absolute;left:491px;top:412px;width:100px;height:17px;border:2px solid;border-color:#9a9a9a #dadada #dadada #9a9a9a;background:#fff;box-sizing:border-box"></div><div class="t" style="left:497px;top:415px;font-size:11px;color:#000;">20000</div><div class="t" style="left:450px;top:443px;font-size:11px;color:#000;">Fc:</div><div style="position:absolute;left:506px;top:443px;width:85px;height:17px;border:2px solid;border-color:#9a9a9a #dadada #dadada #9a9a9a;background:#fff;box-sizing:border-box"></div><div class="t" style="left:512px;top:446px;font-size:11px;color:#000;">1000</div><div style="position:absolute;left:607px;top:389px;width:1px;height:125px;background:#000"></div><div style="position:absolute;left:613px;top:340px;width:1px;height:174px;background:#000"></div><div class="t" style="left:624px;top:416px;font-size:11px;color:#000;letter-spacing:-0.2px;">The attenuation at cutoff</div><div class="t" style="left:624px;top:442px;font-size:11px;color:#000;letter-spacing:-0.2px;">frequencies is fixed at 6 dB</div><div class="t" style="left:624px;top:468px;font-size:11px;color:#000;letter-spacing:-0.2px;">(half the passband gain)</div>
<div style="position:absolute;left:21px;top:0px;width:669px;height:9px;background:linear-gradient(#346ac8 0,#2f62c2 5px,#2856b4 7px,#1e3f9c 8px,#1e3f9c 9px)"></div><div style="position:absolute;left:17px;top:-10px;width:677px;height:399px;border:1px solid #3a68c8;border-top:0;box-sizing:border-box"></div><div style="position:absolute;left:18px;top:-10px;width:675px;height:398px;border:1px solid #86aee2;border-top:0;box-sizing:border-box"></div><div style="position:absolute;left:19px;top:-10px;width:673px;height:397px;border:1px solid #5484d2;border-top:0;box-sizing:border-box"></div><div style="position:absolute;left:20px;top:-10px;width:671px;height:396px;border:1px solid #24489e;border-top:0;box-sizing:border-box"></div><div style="position:absolute;left:23px;top:0px;width:16px;height:3px;background:#000"></div><div style="position:absolute;left:29px;top:0px;width:4px;height:2px;background:#f0f000"></div><div style="position:absolute;left:30px;top:2px;width:2px;height:1px;background:#d8d800"></div><div class="t" style="left:43px;top:-10px;font-size:13px;font-weight:bold;color:#fff;text-shadow:1px 1px #0c2a86;letter-spacing:0.05px">Figure No. 1: Window Visualization Tool</div><div style="position:absolute;left:622px;top:-16px;width:19px;height:21px;border:1px solid #dfe8f8;border-radius:3px;background:linear-gradient(#5a8ae8,#4a78d8);box-sizing:border-box"></div><div style="position:absolute;left:645px;top:-16px;width:19px;height:21px;border:1px solid #dfe8f8;border-radius:3px;background:linear-gradient(#5a8ae8,#4a78d8);box-sizing:border-box"></div><div style="position:absolute;left:668px;top:-16px;width:19px;height:21px;border:1px solid #f0ddd4;border-radius:3px;background:linear-gradient(#e88a60,#d8704a);box-sizing:border-box"></div><div style="position:absolute;left:626px;top:0px;width:8px;height:2px;background:#fff"></div><div style="position:absolute;left:648px;top:0px;width:12px;height:1px;background:#fff"></div><div style="position:absolute;left:675px;top:0px;width:2px;height:2px;background:#fff"></div><div style="position:absolute;left:681px;top:0px;width:2px;height:2px;background:#fff"></div><div style="position:absolute;left:21px;top:9px;width:669px;height:376px;background:#ece9ec"></div><div style="position:absolute;left:21px;top:382px;width:669px;height:3px;background:#f2f0f2"></div><div style="position:absolute;left:25px;top:11px;width:17px;height:13px;background:#fbfafc"></div><div style="position:absolute;left:53px;top:11px;width:18px;height:13px;background:#fbfafc"></div><div style="position:absolute;left:84px;top:11px;width:22px;height:13px;background:#fbfafc"></div><div style="position:absolute;left:117px;top:11px;width:30px;height:13px;background:#fbfafc"></div><div style="position:absolute;left:158px;top:11px;width:27px;height:13px;background:#fbfafc"></div><div style="position:absolute;left:195px;top:11px;width:39px;height:13px;background:#fbfafc"></div><div style="position:absolute;left:245px;top:11px;width:22px;height:13px;background:#fbfafc"></div><div class="t" style="left:26px;top:11px;font-size:11px;color:#000;letter-spacing:-0.2px;">File</div><div class="t" style="left:54px;top:11px;font-size:11px;color:#000;letter-spacing:-0.1px;">Edit</div><div class="t" style="left:84px;top:11px;font-size:11px;color:#000;letter-spacing:-0.3px;">View</div><div class="t" style="left:118px;top:11px;font-size:11px;color:#000;letter-spacing:0.25px;">Insert</div><div class="t" style="left:160px;top:11px;font-size:11px;color:#000;">Tools</div><div class="t" style="left:196px;top:11px;font-size:11px;color:#000;letter-spacing:-0.2px;">Window</div><div class="t" style="left:246px;top:11px;font-size:11px;color:#000;">Help</div><div style="position:absolute;left:21px;top:29px;width:669px;height:1px;background:#a9a8ab"></div><div style="position:absolute;left:21px;top:30px;width:669px;height:1px;background:#fbfbfb"></div><div style="position:absolute;left:25px;top:33px;width:1px;height:22px;background:#fff"></div><div style="position:absolute;left:27px;top:33px;width:1px;height:23px;background:#a9a8ab"></div><div style="position:absolute;left:25px;top:55px;width:3px;height:1px;background:#a9a8ab"></div><div style="position:absolute;left:28px;top:33px;width:1px;height:22px;background:#fff"></div><div style="position:absolute;left:30px;top:33px;width:1px;height:23px;background:#a9a8ab"></div><div style="position:absolute;left:28px;top:55px;width:3px;height:1px;background:#a9a8ab"></div><div style="position:absolute;left:82px;top:34px;width:1px;height:22px;background:#a9a8ab"></div><div style="position:absolute;left:83px;top:34px;width:1px;height:22px;background:#fff"></div><div style="position:absolute;left:186px;top:34px;width:1px;height:22px;background:#a9a8ab"></div><div style="position:absolute;left:187px;top:34px;width:1px;height:22px;background:#fff"></div><div style="position:absolute;left:243px;top:34px;width:1px;height:22px;background:#a9a8ab"></div><div style="position:absolute;left:244px;top:34px;width:1px;height:22px;background:#fff"></div><div style="position:absolute;left:274px;top:34px;width:1px;height:22px;background:#a9a8ab"></div><div style="position:absolute;left:275px;top:34px;width:1px;height:22px;background:#fff"></div><div style="position:absolute;left:306px;top:34px;width:1px;height:22px;background:#a9a8ab"></div><div style="position:absolute;left:307px;top:34px;width:1px;height:22px;background:#fff"></div>
<svg style="position:absolute;left:0;top:0" width="721" height="60" shape-rendering="crispEdges">
<rect x="40" y="38" width="9" height="1" fill="#000"/><rect x="39" y="39" width="1" height="1" fill="#000"/><rect x="40" y="39" width="8" height="1" fill="#fff"/><rect x="48" y="39" width="1" height="1" fill="#000"/><rect x="39" y="40" width="1" height="1" fill="#000"/><rect x="40" y="40" width="1" height="1" fill="#fff"/><rect x="41" y="40" width="5" height="1" fill="#000"/><rect x="46" y="40" width="1" height="1" fill="#fff"/><rect x="47" y="40" width="1" height="1" fill="#000"/><rect x="38" y="41" width="1" height="1" fill="#000"/><rect x="39" y="41" width="8" height="1" fill="#fff"/><rect x="47" y="41" width="1" height="1" fill="#000"/><rect x="38" y="42" width="1" height="1" fill="#000"/><rect x="39" y="42" width="1" height="1" fill="#fff"/><rect x="40" y="42" width="5" height="1" fill="#000"/><rect x="45" y="42" width="1" height="1" fill="#fff"/><rect x="46" y="42" width="4" height="1" fill="#000"/><rect x="37" y="43" width="1" height="1" fill="#000"/><rect x="38" y="43" width="8" height="1" fill="#fff"/><rect x="46" y="43" width="1" height="1" fill="#000"/><rect x="47" y="43" width="1" height="1" fill="#fff"/><rect x="48" y="43" width="1" height="1" fill="#000"/><rect x="49" y="43" width="1" height="1" fill="#fff"/><rect x="50" y="43" width="1" height="1" fill="#000"/><rect x="36" y="44" width="10" height="1" fill="#000"/><rect x="46" y="44" width="1" height="1" fill="#fff"/><rect x="47" y="44" width="1" height="1" fill="#000"/><rect x="48" y="44" width="1" height="1" fill="#fff"/><rect x="49" y="44" width="2" height="1" fill="#000"/><rect x="35" y="45" width="1" height="1" fill="#000"/><rect x="36" y="45" width="10" height="1" fill="#fff"/><rect x="46" y="45" width="1" height="1" fill="#000"/><rect x="47" y="45" width="1" height="1" fill="#fff"/><rect x="48" y="45" width="1" height="1" fill="#000"/><rect x="49" y="45" width="1" height="1" fill="#fff"/><rect x="50" y="45" width="1" height="1" fill="#000"/><rect x="35" y="46" width="12" height="1" fill="#000"/><rect x="47" y="46" width="2" height="1" fill="#fff"/><rect x="49" y="46" width="1" height="1" fill="#000"/><rect x="35" y="47" width="1" height="1" fill="#000"/><rect x="36" y="47" width="11" height="1" fill="#fff"/><rect x="47" y="47" width="1" height="1" fill="#000"/><rect x="48" y="47" width="1" height="1" fill="#fff"/><rect x="49" y="47" width="1" height="1" fill="#000"/><rect x="35" y="48" width="1" height="1" fill="#000"/><rect x="36" y="48" width="6" height="1" fill="#fff"/><rect x="42" y="48" width="3" height="1" fill="#f0f000"/><rect x="45" y="48" width="2" height="1" fill="#fff"/><rect x="47" y="48" width="1" height="1" fill="#000"/><rect x="48" y="48" width="1" height="1" fill="#fff"/><rect x="49" y="48" width="1" height="1" fill="#000"/><rect x="35" y="49" width="13" height="1" fill="#000"/><rect x="48" y="49" width="1" height="1" fill="#fff"/><rect x="49" y="49" width="1" height="1" fill="#000"/><rect x="36" y="50" width="1" height="1" fill="#000"/><rect x="37" y="50" width="9" height="1" fill="#fff"/><rect x="46" y="50" width="1" height="1" fill="#000"/><rect x="47" y="50" width="1" height="1" fill="#fff"/><rect x="48" y="50" width="1" height="1" fill="#000"/><rect x="37" y="51" width="11" height="1" fill="#000"/><rect x="59" y="38" width="9" height="1" fill="#000"/><rect x="59" y="39" width="1" height="1" fill="#000"/><rect x="60" y="39" width="7" height="1" fill="#fff"/><rect x="67" y="39" width="2" height="1" fill="#000"/><rect x="59" y="40" width="1" height="1" fill="#000"/><rect x="60" y="40" width="7" height="1" fill="#fff"/><rect x="67" y="40" width="1" height="1" fill="#000"/><rect x="68" y="40" width="1" height="1" fill="#fff"/><rect x="69" y="40" width="1" height="1" fill="#000"/><rect x="59" y="41" width="1" height="1" fill="#000"/><rect x="60" y="41" width="7" height="1" fill="#fff"/><rect x="67" y="41" width="1" height="1" fill="#000"/><rect x="68" y="41" width="2" height="1" fill="#fff"/><rect x="70" y="41" width="1" height="1" fill="#000"/><rect x="59" y="42" width="1" height="1" fill="#000"/><rect x="60" y="42" width="7" height="1" fill="#fff"/><rect x="67" y="42" width="4" height="1" fill="#000"/><rect x="59" y="43" width="1" height="1" fill="#000"/><rect x="60" y="43" width="7" height="1" fill="#fff"/><rect x="67" y="43" width="4" height="1" fill="#000"/><rect x="59" y="44" width="1" height="1" fill="#000"/><rect x="60" y="44" width="6" height="1" fill="#fff"/><rect x="66" y="44" width="1" height="1" fill="#000"/><rect x="67" y="44" width="4" height="1" fill="#c0c0c0"/><rect x="71" y="44" width="1" height="1" fill="#000"/><rect x="59" y="45" width="1" height="1" fill="#000"/><rect x="60" y="45" width="5" height="1" fill="#fff"/><rect x="65" y="45" width="1" height="1" fill="#000"/><rect x="66" y="45" width="1" height="1" fill="#c0c0c0"/><rect x="67" y="45" width="1" height="1" fill="#40f0f0"/><rect x="68" y="45" width="4" height="1" fill="#c0c0c0"/><rect x="72" y="45" width="1" height="1" fill="#000"/><rect x="59" y="46" width="1" height="1" fill="#000"/><rect x="60" y="46" width="5" height="1" fill="#fff"/><rect x="65" y="46" width="1" height="1" fill="#000"/><rect x="66" y="46" width="2" height="1" fill="#c0c0c0"/><rect x="68" y="46" width="1" height="1" fill="#40f0f0"/><rect x="69" y="46" width="3" height="1" fill="#c0c0c0"/><rect x="72" y="46" width="1" height="1" fill="#000"/><rect x="59" y="47" width="1" height="1" fill="#000"/><rect x="60" y="47" width="5" height="1" fill="#fff"/><rect x="65" y="47" width="1" height="1" fill="#000"/><rect x="66" y="47" width="6" height="1" fill="#c0c0c0"/><rect x="72" y="47" width="1" height="1" fill="#000"/><rect x="59" y="48" width="1" height="1" fill="#000"/><rect x="60" y="48" width="5" height="1" fill="#fff"/><rect x="65" y="48" width="1" height="1" fill="#000"/><rect x="66" y="48" width="4" height="1" fill="#c0c0c0"/><rect x="70" y="48" width="1" height="1" fill="#40f0f0"/><rect x="71" y="48" width="1" height="1" fill="#c0c0c0"/><rect x="72" y="48" width="1" height="1" fill="#000"/><rect x="59" y="49" width="1" height="1" fill="#000"/><rect x="60" y="49" width="6" height="1" fill="#fff"/><rect x="66" y="49" width="1" height="1" fill="#000"/><rect x="67" y="49" width="4" height="1" fill="#c0c0c0"/><rect x="71" y="49" width="1" height="1" fill="#000"/><rect x="59" y="50" width="1" height="1" fill="#000"/><rect x="60" y="50" width="7" height="1" fill="#fff"/><rect x="67" y="50" width="6" height="1" fill="#000"/><rect x="59" y="51" width="1" height="1" fill="#000"/><rect x="60" y="51" width="10" height="1" fill="#fff"/><rect x="70" y="51" width="4" height="1" fill="#000"/><rect x="59" y="52" width="12" height="1" fill="#000"/><rect x="72" y="52" width="2" height="1" fill="#000"/><rect x="121" y="38" width="3" height="1" fill="#000"/><rect x="121" y="39" width="3" height="1" fill="#000"/><rect x="120" y="40" width="2" height="1" fill="#000"/><rect x="123" y="40" width="2" height="1" fill="#000"/><rect x="120" y="41" width="2" height="1" fill="#000"/><rect x="123" y="41" width="2" height="1" fill="#000"/><rect x="119" y="42" width="2" height="1" fill="#000"/><rect x="124" y="42" width="2" height="1" fill="#000"/><rect x="119" y="43" width="2" height="1" fill="#000"/><rect x="124" y="43" width="2" height="1" fill="#000"/><rect x="119" y="44" width="2" height="1" fill="#000"/><rect x="124" y="44" width="2" height="1" fill="#000"/><rect x="118" y="45" width="9" height="1" fill="#000"/><rect x="118" y="46" width="9" height="1" fill="#000"/><rect x="117" y="47" width="3" height="1" fill="#000"/><rect x="125" y="47" width="3" height="1" fill="#000"/><rect x="117" y="48" width="2" height="1" fill="#000"/><rect x="126" y="48" width="2" height="1" fill="#000"/><rect x="117" y="49" width="2" height="1" fill="#000"/><rect x="126" y="49" width="2" height="1" fill="#000"/>
 <rect x="311" y="34" width="23" height="22" fill="#e2e1e6"/>
 <rect x="328" y="38" width="4" height="6" fill="#fff"/>
 <rect x="316" y="48" width="4" height="6" fill="#fff"/>
 <path d="M311.5,56 V34.5 H334" stroke="#8a898c" fill="none"/>
 <path d="M334.5,34 V56.5 H311" stroke="#fff" fill="none"/>
<rect x="95" y="37" width="1" height="1" fill="#000"/><rect x="95" y="38" width="2" height="1" fill="#000"/><rect x="95" y="39" width="3" height="1" fill="#000"/><rect x="95" y="40" width="4" height="1" fill="#000"/><rect x="95" y="41" width="5" height="1" fill="#000"/><rect x="95" y="42" width="6" height="1" fill="#000"/><rect x="95" y="43" width="8" height="1" fill="#000"/><rect x="95" y="44" width="9" height="1" fill="#000"/><rect x="95" y="45" width="5" height="1" fill="#000"/><rect x="95" y="46" width="2" height="1" fill="#000"/><rect x="98" y="46" width="2" height="1" fill="#000"/><rect x="95" y="47" width="1" height="1" fill="#000"/><rect x="99" y="47" width="2" height="1" fill="#000"/><rect x="99" y="48" width="2" height="1" fill="#000"/><rect x="100" y="49" width="2" height="1" fill="#000"/><rect x="100" y="50" width="2" height="1" fill="#000"/><rect x="146" y="39" width="7" height="1" fill="#000"/><rect x="146" y="40" width="7" height="1" fill="#000"/><rect x="149" y="41" width="4" height="1" fill="#000"/><rect x="148" y="42" width="5" height="1" fill="#000"/><rect x="147" y="43" width="3" height="1" fill="#000"/><rect x="151" y="43" width="2" height="1" fill="#000"/><rect x="146" y="44" width="3" height="1" fill="#000"/><rect x="151" y="44" width="2" height="1" fill="#000"/><rect x="145" y="45" width="3" height="1" fill="#000"/><rect x="151" y="45" width="2" height="1" fill="#000"/><rect x="144" y="46" width="3" height="1" fill="#000"/><rect x="143" y="47" width="3" height="1" fill="#000"/><rect x="142" y="48" width="3" height="1" fill="#000"/><rect x="141" y="49" width="3" height="1" fill="#000"/><rect x="141" y="50" width="2" height="1" fill="#000"/><rect x="175" y="39" width="2" height="1" fill="#000"/><rect x="174" y="40" width="3" height="1" fill="#000"/><rect x="173" y="41" width="3" height="1" fill="#000"/><rect x="172" y="42" width="3" height="1" fill="#000"/><rect x="171" y="43" width="3" height="1" fill="#000"/><rect x="170" y="44" width="3" height="1" fill="#000"/><rect x="169" y="45" width="3" height="1" fill="#000"/><rect x="168" y="46" width="3" height="1" fill="#000"/><rect x="167" y="47" width="3" height="1" fill="#000"/><rect x="166" y="48" width="3" height="1" fill="#000"/><rect x="165" y="49" width="3" height="1" fill="#000"/><rect x="165" y="50" width="2" height="1" fill="#000"/><rect x="203" y="37" width="4" height="1" fill="#000"/><rect x="201" y="38" width="2" height="1" fill="#000"/><rect x="207" y="38" width="2" height="1" fill="#000"/><rect x="200" y="39" width="1" height="1" fill="#000"/><rect x="209" y="39" width="1" height="1" fill="#000"/><rect x="199" y="40" width="1" height="1" fill="#000"/><rect x="204" y="40" width="2" height="1" fill="#000"/><rect x="210" y="40" width="1" height="1" fill="#000"/><rect x="199" y="41" width="1" height="1" fill="#000"/><rect x="204" y="41" width="2" height="1" fill="#000"/><rect x="210" y="41" width="1" height="1" fill="#000"/><rect x="199" y="42" width="1" height="1" fill="#000"/><rect x="202" y="42" width="6" height="1" fill="#000"/><rect x="210" y="42" width="1" height="1" fill="#000"/><rect x="199" y="43" width="1" height="1" fill="#000"/><rect x="202" y="43" width="6" height="1" fill="#000"/><rect x="210" y="43" width="1" height="1" fill="#000"/><rect x="199" y="44" width="1" height="1" fill="#000"/><rect x="204" y="44" width="2" height="1" fill="#000"/><rect x="210" y="44" width="1" height="1" fill="#000"/><rect x="200" y="45" width="1" height="1" fill="#000"/><rect x="204" y="45" width="2" height="1" fill="#000"/><rect x="209" y="45" width="1" height="1" fill="#000"/><rect x="201" y="46" width="2" height="1" fill="#000"/><rect x="207" y="46" width="2" height="1" fill="#000"/><rect x="200" y="47" width="7" height="1" fill="#000"/><rect x="199" y="48" width="3" height="1" fill="#000"/><rect x="198" y="49" width="3" height="1" fill="#000"/><rect x="197" y="50" width="3" height="1" fill="#000"/><rect x="196" y="51" width="3" height="1" fill="#000"/><rect x="197" y="52" width="1" height="1" fill="#000"/><rect x="227" y="37" width="4" height="1" fill="#000"/><rect x="225" y="38" width="2" height="1" fill="#000"/><rect x="231" y="38" width="2" height="1" fill="#000"/><rect x="224" y="39" width="1" height="1" fill="#000"/><rect x="233" y="39" width="1" height="1" fill="#000"/><rect x="223" y="40" width="1" height="1" fill="#000"/><rect x="234" y="40" width="1" height="1" fill="#000"/><rect x="223" y="41" width="1" height="1" fill="#000"/><rect x="234" y="41" width="1" height="1" fill="#000"/><rect x="223" y="42" width="1" height="1" fill="#000"/><rect x="226" y="42" width="6" height="1" fill="#000"/><rect x="234" y="42" width="1" height="1" fill="#000"/><rect x="223" y="43" width="1" height="1" fill="#000"/><rect x="226" y="43" width="6" height="1" fill="#000"/><rect x="234" y="43" width="1" height="1" fill="#000"/><rect x="223" y="44" width="1" height="1" fill="#000"/><rect x="234" y="44" width="1" height="1" fill="#000"/><rect x="224" y="45" width="1" height="1" fill="#000"/><rect x="233" y="45" width="1" height="1" fill="#000"/><rect x="225" y="46" width="2" height="1" fill="#000"/><rect x="231" y="46" width="2" height="1" fill="#000"/><rect x="224" y="47" width="7" height="1" fill="#000"/><rect x="223" y="48" width="3" height="1" fill="#000"/><rect x="222" y="49" width="3" height="1" fill="#000"/><rect x="221" y="50" width="3" height="1" fill="#000"/><rect x="220" y="51" width="3" height="1" fill="#000"/><rect x="221" y="52" width="1" height="1" fill="#000"/><rect x="251" y="37" width="1" height="1" fill="#000"/><rect x="252" y="37" width="5" height="1" fill="#c0c0c0"/><rect x="257" y="37" width="10" height="1" fill="#000"/><rect x="251" y="38" width="1" height="1" fill="#000"/><rect x="252" y="38" width="5" height="1" fill="#c0c0c0"/><rect x="257" y="38" width="1" height="1" fill="#000"/><rect x="258" y="38" width="8" height="1" fill="#fff"/><rect x="266" y="38" width="1" height="1" fill="#000"/><rect x="251" y="39" width="1" height="1" fill="#000"/><rect x="252" y="39" width="5" height="1" fill="#c0c0c0"/><rect x="257" y="39" width="1" height="1" fill="#000"/><rect x="258" y="39" width="4" height="1" fill="#0000ff"/><rect x="262" y="39" width="1" height="1" fill="#fff"/><rect x="263" y="39" width="2" height="1" fill="#000"/><rect x="265" y="39" width="1" height="1" fill="#fff"/><rect x="266" y="39" width="1" height="1" fill="#000"/><rect x="251" y="40" width="1" height="1" fill="#000"/><rect x="252" y="40" width="5" height="1" fill="#c0c0c0"/><rect x="257" y="40" width="1" height="1" fill="#000"/><rect x="258" y="40" width="8" height="1" fill="#fff"/><rect x="266" y="40" width="1" height="1" fill="#000"/><rect x="251" y="41" width="1" height="1" fill="#000"/><rect x="252" y="41" width="5" height="1" fill="#c0c0c0"/><rect x="257" y="41" width="1" height="1" fill="#000"/><rect x="258" y="41" width="4" height="1" fill="#ff0000"/><rect x="262" y="41" width="1" height="1" fill="#fff"/><rect x="263" y="41" width="2" height="1" fill="#000"/><rect x="265" y="41" width="1" height="1" fill="#fff"/><rect x="266" y="41" width="1" height="1" fill="#000"/><rect x="251" y="42" width="1" height="1" fill="#000"/><rect x="252" y="42" width="5" height="1" fill="#c0c0c0"/><rect x="257" y="42" width="1" height="1" fill="#000"/><rect x="258" y="42" width="8" height="1" fill="#fff"/><rect x="266" y="42" width="1" height="1" fill="#000"/><rect x="251" y="43" width="1" height="1" fill="#000"/><rect x="252" y="43" width="5" height="1" fill="#c0c0c0"/><rect x="257" y="43" width="10" height="1" fill="#000"/><rect x="251" y="44" width="1" height="1" fill="#000"/><rect x="252" y="44" width="15" height="1" fill="#c0c0c0"/><rect x="251" y="45" width="1" height="1" fill="#000"/><rect x="252" y="45" width="15" height="1" fill="#c0c0c0"/><rect x="251" y="46" width="1" height="1" fill="#000"/><rect x="252" y="46" width="2" height="1" fill="#0000ff"/><rect x="254" y="46" width="11" height="1" fill="#c0c0c0"/><rect x="265" y="46" width="2" height="1" fill="#ff0000"/><rect x="251" y="47" width="1" height="1" fill="#000"/><rect x="252" y="47" width="1" height="1" fill="#c0c0c0"/><rect x="253" y="47" width="7" height="1" fill="#0000ff"/><rect x="260" y="47" width="4" height="1" fill="#c0c0c0"/><rect x="264" y="47" width="2" height="1" fill="#ff0000"/><rect x="266" y="47" width="1" height="1" fill="#c0c0c0"/><rect x="251" y="48" width="1" height="1" fill="#000"/><rect x="252" y="48" width="7" height="1" fill="#c0c0c0"/><rect x="259" y="48" width="4" height="1" fill="#0000ff"/><rect x="263" y="48" width="1" height="1" fill="#c0c0c0"/><rect x="264" y="48" width="1" height="1" fill="#ff0000"/><rect x="265" y="48" width="2" height="1" fill="#c0c0c0"/><rect x="251" y="49" width="1" height="1" fill="#000"/><rect x="252" y="49" width="4" height="1" fill="#c0c0c0"/><rect x="256" y="49" width="3" height="1" fill="#ff0000"/><rect x="259" y="49" width="3" height="1" fill="#c0c0c0"/><rect x="262" y="49" width="3" height="1" fill="#ff0000"/><rect x="265" y="49" width="2" height="1" fill="#c0c0c0"/><rect x="251" y="50" width="1" height="1" fill="#000"/><rect x="252" y="50" width="1" height="1" fill="#c0c0c0"/><rect x="253" y="50" width="3" height="1" fill="#ff0000"/><rect x="256" y="50" width="2" height="1" fill="#c0c0c0"/><rect x="258" y="50" width="5" height="1" fill="#ff0000"/><rect x="263" y="50" width="1" height="1" fill="#c0c0c0"/><rect x="264" y="50" width="2" height="1" fill="#0000ff"/><rect x="266" y="50" width="1" height="1" fill="#c0c0c0"/><rect x="251" y="51" width="1" height="1" fill="#000"/><rect x="252" y="51" width="1" height="1" fill="#ff0000"/><rect x="253" y="51" width="13" height="1" fill="#c0c0c0"/><rect x="266" y="51" width="1" height="1" fill="#0000ff"/><rect x="251" y="52" width="16" height="1" fill="#000"/><rect x="284" y="38" width="1" height="1" fill="#000"/><rect x="284" y="39" width="2" height="1" fill="#000"/><rect x="284" y="40" width="3" height="1" fill="#000"/><rect x="284" y="41" width="4" height="1" fill="#000"/><rect x="284" y="42" width="5" height="1" fill="#000"/><rect x="284" y="43" width="6" height="1" fill="#000"/><rect x="284" y="44" width="7" height="1" fill="#000"/><rect x="284" y="45" width="8" height="1" fill="#000"/><rect x="284" y="46" width="6" height="1" fill="#000"/><rect x="284" y="47" width="2" height="1" fill="#000"/><rect x="287" y="47" width="3" height="1" fill="#000"/><rect x="284" y="48" width="1" height="1" fill="#000"/><rect x="288" y="48" width="2" height="1" fill="#000"/><rect x="288" y="49" width="3" height="1" fill="#000"/><rect x="289" y="50" width="2" height="1" fill="#000"/><rect x="289" y="51" width="2" height="1" fill="#000"/><rect x="292" y="37" width="6" height="1" fill="#000080"/><rect x="291" y="38" width="8" height="1" fill="#000080"/><rect x="290" y="39" width="3" height="1" fill="#000080"/><rect x="296" y="39" width="3" height="1" fill="#000080"/><rect x="290" y="40" width="2" height="1" fill="#000080"/><rect x="297" y="40" width="3" height="1" fill="#000080"/><rect x="290" y="41" width="2" height="1" fill="#000080"/><rect x="297" y="41" width="3" height="1" fill="#000080"/><rect x="296" y="42" width="3" height="1" fill="#000080"/><rect x="295" y="43" width="3" height="1" fill="#000080"/><rect x="294" y="44" width="3" height="1" fill="#000080"/><rect x="294" y="45" width="3" height="1" fill="#000080"/><rect x="294" y="46" width="3" height="1" fill="#000080"/><rect x="294" y="47" width="3" height="1" fill="#000080"/><rect x="294" y="49" width="3" height="1" fill="#000080"/><rect x="294" y="50" width="3" height="1" fill="#000080"/><rect x="316" y="38" width="12" height="1" fill="#000"/><rect x="316" y="39" width="1" height="1" fill="#000"/><rect x="317" y="39" width="6" height="1" fill="#000080"/><rect x="323" y="39" width="1" height="1" fill="#fff"/><rect x="324" y="39" width="1" height="1" fill="#000080"/><rect x="325" y="39" width="1" height="1" fill="#fff"/><rect x="326" y="39" width="1" height="1" fill="#000080"/><rect x="327" y="39" width="1" height="1" fill="#000"/><rect x="316" y="40" width="1" height="1" fill="#000"/><rect x="317" y="40" width="10" height="1" fill="#fffbf0"/><rect x="327" y="40" width="1" height="1" fill="#000"/><rect x="316" y="41" width="1" height="1" fill="#000"/><rect x="317" y="41" width="4" height="1" fill="#fffbf0"/><rect x="321" y="41" width="4" height="1" fill="#ff0000"/><rect x="325" y="41" width="2" height="1" fill="#fffbf0"/><rect x="327" y="41" width="1" height="1" fill="#000"/><rect x="316" y="42" width="1" height="1" fill="#000"/><rect x="317" y="42" width="3" height="1" fill="#fffbf0"/><rect x="320" y="42" width="1" height="1" fill="#ff0000"/><rect x="321" y="42" width="4" height="1" fill="#fffbf0"/><rect x="325" y="42" width="1" height="1" fill="#ff0000"/><rect x="326" y="42" width="1" height="1" fill="#fffbf0"/><rect x="327" y="42" width="1" height="1" fill="#000"/><rect x="316" y="43" width="1" height="1" fill="#000"/><rect x="317" y="43" width="8" height="1" fill="#fffbf0"/><rect x="325" y="43" width="1" height="1" fill="#ff0000"/><rect x="326" y="43" width="1" height="1" fill="#fffbf0"/><rect x="327" y="43" width="1" height="1" fill="#000"/><rect x="316" y="44" width="1" height="1" fill="#000"/><rect x="317" y="44" width="3" height="1" fill="#fffbf0"/><rect x="320" y="44" width="5" height="1" fill="#000"/><rect x="325" y="44" width="1" height="1" fill="#ff0000"/><rect x="326" y="44" width="6" height="1" fill="#000"/><rect x="316" y="45" width="1" height="1" fill="#000"/><rect x="317" y="45" width="3" height="1" fill="#fffbf0"/><rect x="320" y="45" width="1" height="1" fill="#000"/><rect x="321" y="45" width="4" height="1" fill="#000080"/><rect x="325" y="45" width="1" height="1" fill="#ff0000"/><rect x="326" y="45" width="1" height="1" fill="#000080"/><rect x="327" y="45" width="1" height="1" fill="#fff"/><rect x="328" y="45" width="1" height="1" fill="#000080"/><rect x="329" y="45" width="1" height="1" fill="#fff"/><rect x="330" y="45" width="1" height="1" fill="#000080"/><rect x="331" y="45" width="1" height="1" fill="#000"/><rect x="316" y="46" width="1" height="1" fill="#000"/><rect x="317" y="46" width="3" height="1" fill="#fffbf0"/><rect x="320" y="46" width="1" height="1" fill="#000"/><rect x="321" y="46" width="4" height="1" fill="#fffbf0"/><rect x="325" y="46" width="1" height="1" fill="#ff0000"/><rect x="326" y="46" width="5" height="1" fill="#fffbf0"/><rect x="331" y="46" width="1" height="1" fill="#000"/><rect x="316" y="47" width="5" height="1" fill="#000"/><rect x="321" y="47" width="4" height="1" fill="#fffbf0"/><rect x="325" y="47" width="1" height="1" fill="#ff0000"/><rect x="326" y="47" width="5" height="1" fill="#fffbf0"/><rect x="331" y="47" width="1" height="1" fill="#000"/><rect x="320" y="48" width="1" height="1" fill="#000"/><rect x="321" y="48" width="2" height="1" fill="#fffbf0"/><rect x="323" y="48" width="5" height="1" fill="#ff0000"/><rect x="328" y="48" width="3" height="1" fill="#fffbf0"/><rect x="331" y="48" width="1" height="1" fill="#000"/><rect x="320" y="49" width="1" height="1" fill="#000"/><rect x="321" y="49" width="3" height="1" fill="#fffbf0"/><rect x="324" y="49" width="3" height="1" fill="#ff0000"/><rect x="327" y="49" width="4" height="1" fill="#fffbf0"/><rect x="331" y="49" width="1" height="1" fill="#000"/><rect x="320" y="50" width="1" height="1" fill="#000"/><rect x="321" y="50" width="4" height="1" fill="#fffbf0"/><rect x="325" y="50" width="1" height="1" fill="#ff0000"/><rect x="326" y="50" width="5" height="1" fill="#fffbf0"/><rect x="331" y="50" width="1" height="1" fill="#000"/><rect x="320" y="51" width="1" height="1" fill="#000"/><rect x="321" y="51" width="10" height="1" fill="#fffbf0"/><rect x="331" y="51" width="1" height="1" fill="#000"/><rect x="320" y="52" width="1" height="1" fill="#000"/><rect x="321" y="52" width="10" height="1" fill="#fffbf0"/><rect x="331" y="52" width="1" height="1" fill="#000"/><rect x="320" y="53" width="12" height="1" fill="#000"/>
</svg><div style="position:absolute;left:25px;top:71px;width:660px;height:311px;border:1px solid #000;box-sizing:border-box;box-shadow:inset 1px 1px #fafafa, inset -1px -1px #fafafa"></div><div style="position:absolute;left:35px;top:64px;width:78px;height:14px;background:#ece9ec"></div><div class="t" style="left:37px;top:62px;font-size:11px;color:#000;letter-spacing:-0.1px;">Window Viewer</div><svg style="position:absolute;left:0;top:0" width="721" height="400" shape-rendering="crispEdges"><rect x="73" y="99" width="256" height="223" fill="#fff"/><rect x="390" y="100" width="256" height="222" fill="#fff"/><path d="M96.5,322 V100 M142.5,322 V100 M188.5,322 V100 M235.5,322 V100 M281.5,322 V100 M73,120.5 H328 M73,160.5 H328 M73,200.5 H328 M73,240.5 H328 M73,280.5 H328 M441.5,322 V101 M492.5,322 V101 M543.5,322 V101 M594.5,322 V101 M390,144.5 H645 M390,188.5 H645 M390,232.5 H645 M390,276.5 H645" stroke="#5f5f5f" stroke-width="1" stroke-dasharray="3,3" fill="none"/><path d="M96.5,100 V103 M142.5,100 V103 M188.5,100 V103 M235.5,100 V103 M281.5,100 V103 M441.5,101 V104 M492.5,101 V104 M543.5,101 V104 M594.5,101 V104" stroke="#5f5f5f" stroke-width="1" fill="none"/><rect x="73.5" y="99.5" width="255" height="222" fill="none" stroke="#5f5f5f"/><rect x="390.5" y="100.5" width="255" height="221" fill="none" stroke="#5f5f5f"/><polyline points="73.50,304.62 96.68,289.94 119.86,250.57 143.05,199.00 166.23,151.61 189.41,123.45 212.59,123.45 235.77,151.61 258.95,199.00 282.14,250.57 305.32,289.94 328.50,304.62" stroke="#0000ff" stroke-width="1.6" fill="none" shape-rendering="auto"/><polyline points="390.50,109.44 391.00,109.44 391.50,109.45 391.99,109.46 392.49,109.47 392.99,109.49 393.49,109.51 393.99,109.53 394.48,109.56 394.98,109.59 395.48,109.63 395.98,109.67 396.48,109.71 396.97,109.76 397.47,109.81 397.97,109.87 398.47,109.93 398.97,109.99 399.46,110.05 399.96,110.12 400.46,110.20 400.96,110.28 401.46,110.36 401.96,110.44 402.45,110.53 402.95,110.63 403.45,110.72 403.95,110.82 404.45,110.93 404.94,111.04 405.44,111.15 405.94,111.27 406.44,111.39 406.94,111.51 407.43,111.64 407.93,111.77 408.43,111.91 408.93,112.05 409.43,112.19 409.92,112.34 410.42,112.49 410.92,112.65 411.42,112.81 411.92,112.97 412.41,113.14 412.91,113.31 413.41,113.49 413.91,113.67 414.41,113.85 414.90,114.04 415.40,114.23 415.90,114.43 416.40,114.63 416.90,114.83 417.39,115.04 417.89,115.25 418.39,115.47 418.89,115.69 419.39,115.92 419.88,116.15 420.38,116.38 420.88,116.62 421.38,116.87 421.88,117.11 422.38,117.36 422.87,117.62 423.37,117.88 423.87,118.15 424.37,118.42 424.87,118.69 425.36,118.97 425.86,119.25 426.36,119.54 426.86,119.83 427.36,120.13 427.85,120.43 428.35,120.73 428.85,121.04 429.35,121.36 429.85,121.68 430.34,122.00 430.84,122.33 431.34,122.67 431.84,123.00 432.34,123.35 432.83,123.70 433.33,124.05 433.83,124.41 434.33,124.77 434.83,125.14 435.32,125.51 435.82,125.89 436.32,126.27 436.82,126.66 437.32,127.06 437.81,127.46 438.31,127.86 438.81,128.27 439.31,128.68 439.81,129.10 440.30,129.53 440.80,129.96 441.30,130.40 441.80,130.84 442.30,131.29 442.79,131.74 443.29,132.20 443.79,132.66 444.29,133.13 444.79,133.61 445.29,134.09 445.78,134.58 446.28,135.07 446.78,135.57 447.28,136.07 447.78,136.59 448.27,137.10 448.77,137.63 449.27,138.16 449.77,138.69 450.27,139.23 450.76,139.78 451.26,140.34 451.76,140.90 452.26,141.47 452.76,142.04 453.25,142.62 453.75,143.21 454.25,143.80 454.75,144.40 455.25,145.01 455.74,145.63 456.24,146.25 456.74,146.88 457.24,147.51 457.74,148.15 458.23,148.80 458.73,149.46 459.23,150.12 459.73,150.80 460.23,151.48 460.72,152.16 461.22,152.86 461.72,153.56 462.22,154.27 462.72,154.98 463.21,155.71 463.71,156.44 464.21,157.18 464.71,157.93 465.21,158.69 465.71,159.45 466.20,160.22 466.70,161.01 467.20,161.80 467.70,162.59 468.20,163.40 468.69,164.21 469.19,165.04 469.69,165.87 470.19,166.71 470.69,167.56 471.18,168.42 471.68,169.29 472.18,170.17 472.68,171.05 473.18,171.95 473.67,172.85 474.17,173.77 474.67,174.69 475.17,175.63 475.67,176.57 476.16,177.53 476.66,178.50 477.16,179.47 477.66,180.46 478.16,181.46 478.65,182.47 479.15,183.49 479.65,184.53 480.15,185.58 480.65,186.64 481.14,187.71 481.64,188.81 482.14,189.91 482.64,191.03 483.14,192.17 483.63,193.33 484.13,194.51 484.63,195.71 485.13,196.94 485.63,198.19 486.12,199.46 486.62,200.77 487.12,202.11 487.62,203.49 488.12,204.91 488.62,206.38 489.11,207.91 489.61,209.49 490.11,211.15 490.61,212.89 491.11,214.72 491.60,216.67 492.10,218.76 492.60,221.01 493.10,223.48 493.60,226.21 494.09,229.28 494.59,232.82 495.09,237.02 495.59,242.25 496.09,249.23 496.58,259.95 497.08,285.24 497.58,275.31 498.08,257.22 498.58,248.20 499.07,242.17 499.57,237.65 500.07,234.03 500.57,231.02 501.07,228.44 501.56,226.18 502.06,224.18 502.56,222.37 503.06,220.73 503.56,219.22 504.05,217.83 504.55,216.53 505.05,215.32 505.55,214.18 506.05,213.11 506.54,212.09 507.04,211.13 507.54,210.21 508.04,209.34 508.54,208.50 509.04,207.70 509.53,206.93 510.03,206.19 510.53,205.48 511.03,204.80 511.53,204.14 512.02,203.51 512.52,202.89 513.02,202.31 513.52,201.74 514.02,201.19 514.51,200.66 515.01,200.15 515.51,199.66 516.01,199.19 516.51,198.73 517.00,198.30 517.50,197.87 518.00,197.47 518.50,197.08 519.00,196.71 519.49,196.35 519.99,196.01 520.49,195.68 520.99,195.37 521.49,195.08 521.98,194.80 522.48,194.53 522.98,194.28 523.48,194.04 523.98,193.82 524.47,193.62 524.97,193.43 525.47,193.25 525.97,193.09 526.47,192.95 526.96,192.82 527.46,192.70 527.96,192.60 528.46,192.52 528.96,192.45 529.46,192.40 529.95,192.36 530.45,192.34 530.95,192.33 531.45,192.35 531.95,192.38 532.44,192.42 532.94,192.49 533.44,192.57 533.94,192.67 534.44,192.79 534.93,192.92 535.43,193.08 535.93,193.26 536.43,193.45 536.93,193.67 537.42,193.91 537.92,194.18 538.42,194.46 538.92,194.77 539.42,195.11 539.91,195.47 540.41,195.86 540.91,196.28 541.41,196.73 541.91,197.21 542.40,197.72 542.90,198.27 543.40,198.86 543.90,199.49 544.40,200.16 544.89,200.88 545.39,201.65 545.89,202.47 546.39,203.35 546.89,204.30 547.38,205.33 547.88,206.43 548.38,207.63 548.88,208.93 549.38,210.35 549.88,211.91 550.37,213.63 550.87,215.55 551.37,217.71 551.87,220.17 552.37,223.02 552.86,226.41 553.36,230.56 553.86,235.90 554.36,243.36 554.86,255.81 555.35,303.20 555.85,259.34 556.35,245.08 556.85,236.99 557.35,231.33 557.84,226.97 558.34,223.44 558.84,220.47 559.34,217.92 559.84,215.68 560.33,213.69 560.83,211.91 561.33,210.30 561.83,208.83 562.33,207.48 562.82,206.24 563.32,205.10 563.82,204.04 564.32,203.06 564.82,202.14 565.31,201.29 565.81,200.49 566.31,199.75 566.81,199.05 567.31,198.40 567.80,197.79 568.30,197.22 568.80,196.69 569.30,196.20 569.80,195.73 570.29,195.31 570.79,194.91 571.29,194.54 571.79,194.20 572.29,193.89 572.79,193.60 573.28,193.35 573.78,193.11 574.28,192.91 574.78,192.72 575.28,192.56 575.77,192.43 576.27,192.31 576.77,192.23 577.27,192.16 577.77,192.12 578.26,192.10 578.76,192.10 579.26,192.12 579.76,192.17 580.26,192.24 580.75,192.34 581.25,192.46 581.75,192.60 582.25,192.76 582.75,192.95 583.24,193.17 583.74,193.41 584.24,193.68 584.74,193.97 585.24,194.30 585.73,194.65 586.23,195.03 586.73,195.44 587.23,195.89 587.73,196.37 588.22,196.89 588.72,197.44 589.22,198.04 589.72,198.67 590.22,199.36 590.71,200.09 591.21,200.88 591.71,201.72 592.21,202.63 592.71,203.61 593.21,204.66 593.70,205.80 594.20,207.04 594.70,208.39 595.20,209.86 595.70,211.49 596.19,213.28 596.69,215.29 597.19,217.57 597.69,220.17 598.19,223.21 598.68,226.85 599.18,231.38 599.68,237.35 600.18,246.09 600.68,262.65 601.17,281.68 601.67,252.00 602.17,240.87 602.67,233.89 603.17,228.80 603.66,224.80 604.16,221.51 604.66,218.72 605.16,216.31 605.66,214.19 606.15,212.30 606.65,210.61 607.15,209.07 607.65,207.67 608.15,206.38 608.64,205.20 609.14,204.11 609.64,203.10 610.14,202.17 610.64,201.30 611.13,200.49 611.63,199.74 612.13,199.03 612.63,198.38 613.13,197.77 613.62,197.20 614.12,196.67 614.62,196.18 615.12,195.72 615.62,195.30 616.12,194.91 616.61,194.55 617.11,194.22 617.61,193.92 618.11,193.65 618.61,193.41 619.10,193.19 619.60,192.99 620.10,192.83 620.60,192.69 621.10,192.57 621.59,192.48 622.09,192.41 622.59,192.36 623.09,192.34 623.59,192.34 624.08,192.37 624.58,192.42 625.08,192.50 625.58,192.59 626.08,192.72 626.57,192.86 627.07,193.04 627.57,193.24 628.07,193.46 628.57,193.71 629.06,193.99 629.56,194.30 630.06,194.63 630.56,195.00 631.06,195.40 631.55,195.83 632.05,196.29 632.55,196.79 633.05,197.33 633.55,197.91 634.04,198.53 634.54,199.20 635.04,199.92 635.54,200.68 636.04,201.51 636.54,202.40 637.03,203.35 637.53,204.38 638.03,205.49 638.53,206.70 639.03,208.01 639.52,209.45 640.02,211.03 640.52,212.77 641.02,214.72 641.52,216.91 642.01,219.42 642.51,222.32 643.01,225.78 643.51,230.03 644.01,235.52 644.50,243.29 645.00,256.58" stroke="#0000ff" stroke-width="1.8" fill="none" stroke-linejoin="round" shape-rendering="auto"/></svg><div class="t" style="right:653px;top:314px;color:#666666;letter-spacing:-0.4px">0</div><div class="t" style="right:653px;top:273px;color:#666666;letter-spacing:-0.4px">0.2</div><div class="t" style="right:653px;top:233px;color:#666666;letter-spacing:-0.4px">0.4</div><div class="t" style="right:653px;top:193px;color:#666666;letter-spacing:-0.4px">0.6</div><div class="t" style="right:653px;top:153px;color:#666666;letter-spacing:-0.4px">0.8</div><div class="t" style="right:653px;top:113px;color:#666666;letter-spacing:-0.4px">1</div><div class="t" style="left:75px;width:40px;text-align:center;top:324px;color:#666666;letter-spacing:-0.4px">2</div><div class="t" style="left:121px;width:40px;text-align:center;top:324px;color:#666666;letter-spacing:-0.4px">4</div><div class="t" style="left:167px;width:40px;text-align:center;top:324px;color:#666666;letter-spacing:-0.4px">6</div><div class="t" style="left:214px;width:40px;text-align:center;top:324px;color:#666666;letter-spacing:-0.4px">8</div><div class="t" style="left:260px;width:40px;text-align:center;top:324px;color:#666666;letter-spacing:-0.4px">10</div><div class="t" style="left:307px;width:40px;text-align:center;top:324px;color:#666666;letter-spacing:-0.4px">12</div><div class="t" style="right:336px;top:93px;color:#666666;letter-spacing:-0.4px">20</div><div class="t" style="right:336px;top:137px;color:#666666;letter-spacing:-0.4px">0</div><div class="t" style="right:336px;top:181px;color:#666666;letter-spacing:-0.4px">-20</div><div class="t" style="right:336px;top:225px;color:#666666;letter-spacing:-0.4px">-40</div><div class="t" style="right:336px;top:269px;color:#666666;letter-spacing:-0.4px">-60</div><div class="t" style="right:336px;top:314px;color:#666666;letter-spacing:-0.4px">-80</div><div class="t" style="left:370px;width:40px;text-align:center;top:324px;color:#666666;letter-spacing:-0.4px">0</div><div class="t" style="left:421px;width:40px;text-align:center;top:324px;color:#666666;letter-spacing:-0.4px">0.2</div><div class="t" style="left:472px;width:40px;text-align:center;top:324px;color:#666666;letter-spacing:-0.4px">0.4</div><div class="t" style="left:523px;width:40px;text-align:center;top:324px;color:#666666;letter-spacing:-0.4px">0.6</div><div class="t" style="left:574px;width:40px;text-align:center;top:324px;color:#666666;letter-spacing:-0.4px">0.8</div><div class="t" style="left:169px;top:81px;font-size:11px;color:#000;letter-spacing:-0.3px;">Time domain</div><div class="t" style="left:470px;top:81px;font-size:11px;color:#000;">Frequency domain</div><div class="t" style="left:177px;top:340px;font-size:11px;color:#000;">Samples</div><div class="t" style="left:420px;top:340px;font-size:11px;color:#000;letter-spacing:-0.11px;">Normalized Frequency&nbsp; (×π rad/sample)</div><div class="t" style="left:38.5px;top:213px;transform:translate(-50%,-50%) rotate(-90deg);">Amplitude</div><div class="t" style="left:355.5px;top:212.5px;transform:translate(-50%,-50%) rotate(-90deg);">Magnitude (dB)</div><div class="t" style="left:47px;top:357px;font-size:11px;color:#666666;letter-spacing:-0.14px;">Leakage Factor: 0.04 %</div><div class="t" style="left:213px;top:357px;font-size:11px;color:#666666;letter-spacing:-0.16px;">Relative sidelobe attenuation: -37.4 dB</div><div class="t" style="left:462px;top:357px;font-size:11px;color:#666666;letter-spacing:-0.14px;">Mainlobe width (-3dB): 0.22656</div>
</body></html>
